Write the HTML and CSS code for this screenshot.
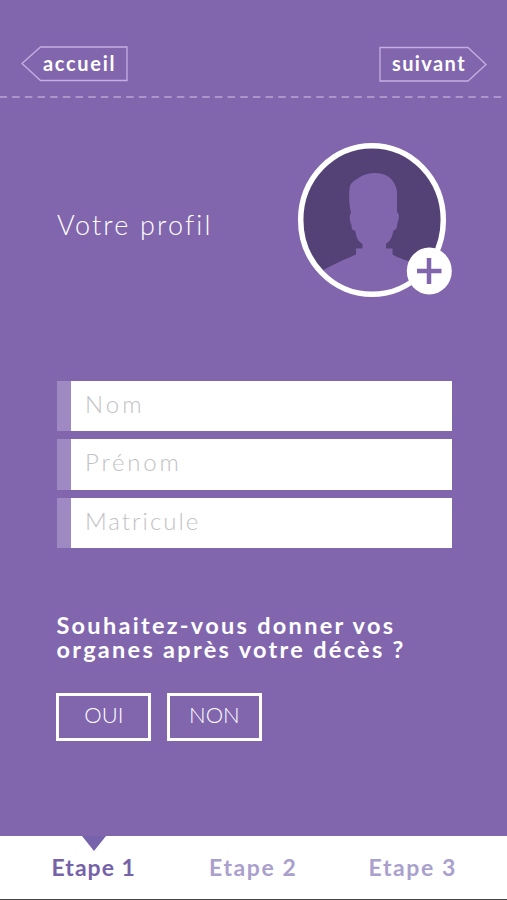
FILE: index.html
```html
<!DOCTYPE html>
<html lang="fr">
<head>
<meta charset="utf-8">
<title>Votre profil</title>
<link rel="stylesheet" href="styles.css">
</head>
<body>
<div class="app">
  <header class="top">
    <a class="tag tag-back">
      <svg class="tag-shape" viewBox="0 0 108 36"><path d="M2 17.500 20.500 1H107V34.500H20.500Z"/></svg>
      <span class="tag-text back-text">accueil</span>
    </a>
    <a class="tag tag-next">
      <svg class="tag-shape" viewBox="0 0 108 36"><path d="M1 1.500H89L107 18.500 89 35H1Z"/></svg>
      <span class="tag-text next-text">suivant</span>
    </a>
  </header>
  <svg class="dashes" viewBox="0 0 507 2"><path d="M-.5 1H504" stroke-dasharray="7.500 5.170"/></svg>
  <section class="profile">
    <h1 class="title">Votre profil</h1>
    <svg class="avatar" viewBox="0 0 156 156">
      <defs><clipPath id="disc"><ellipse cx="75" cy="78" rx="72" ry="75"/></clipPath></defs>
      <ellipse cx="75" cy="78" rx="72" ry="75" fill="#544277"/>
      <path clip-path="url(#disc)" fill="#8166ae" d="M10 160V138C20 131 30 126 40 121C48 117 54 115 59 112.500V106.500H65.500V102C62 100 60 97 59.500 94L58 88.500C55 88.500 54.500 86 54.500 83C52.500 79 52 73 54 71C52 62 51.500 51 53 44C55 39 59 38 63 35C68 32 73 31 78 31C86 31 92 34 95 38C98 42 100 46 100 51V70C103 72 102 77 100 83C100 86 99 88 96.500 88.500L95 94C94 97 92 100 89 102V106.500H95.500V112.500C101 116 106 117 111 119C124 123 131 127 140 134V160Z"/>
      <ellipse cx="75" cy="78" rx="71.300" ry="74.300" fill="none" stroke="#fff" stroke-width="5.500"/>
      <ellipse cx="132.300" cy="129" rx="22.500" ry="23.500" fill="#fff"/>
      <path d="M120 129H144.500M132 116V142" stroke="#8166ae" stroke-width="4.500"/>
    </svg>
  </section>
  <form class="fields">
    <label class="field"><span class="nom">Nom</span></label>
    <label class="field"><span class="prenom">Prénom</span></label>
    <label class="field"><span class="matricule">Matricule</span></label>
  </form>
  <section class="question">
    <p class="ask">Souhaitez-vous donner vos organes après votre décès ?</p>
    <div class="choices">
      <a class="choice">OUI</a>
      <a class="choice">NON</a>
    </div>
  </section>
  <nav class="steps">
    <a class="step active"><svg class="pointer" viewBox="0 0 24 15"><path d="M0 0H24L12 15Z"/></svg>Etape 1</a>
    <a class="step wide">Etape 2</a>
    <a class="step wide">Etape 3</a>
  </nav>
</div>
</body>
</html>
```
FILE: styles.css
```css
* { box-sizing: border-box; }
body { margin: 0; font-family: Lato, "Open Sans", sans-serif; background: #8166ae; }
.app { width: 507px; height: 900px; display: flex; flex-direction: column; overflow: hidden; color: #fff; }
.top { height: 96px; padding: 46px 20px 0; display: flex; justify-content: space-between; }
.tag { width: 108px; height: 36px; display: grid; }
.tag-shape { grid-area: 1 / 1; width: 108px; height: 36px; fill: none; stroke: #c5aee2; stroke-width: 1.3; }
.tag-text { grid-area: 1 / 1; font-size: 20px; font-weight: 700; line-height: 35px; letter-spacing: 1.7px; white-space: nowrap; }
.back-text { padding-left: 23px; }
.next-text { padding-left: 13px; letter-spacing: 1.4px; }
.dashes { width: 507px; height: 2px; flex: none; fill: none; stroke: #bda4d5; stroke-width: 1.6; }
.profile { height: 282.5px; padding: 44px 54px 0 57px; display: flex; justify-content: space-between; }
.title { margin: 65px 0 0; font-size: 27px; line-height: 36px; font-weight: 300; letter-spacing: 2.15px; white-space: nowrap; }
.avatar { width: 156px; height: 156px; flex: none; }
.fields { padding: 0 55.5px 0 56.5px; display: flex; flex-direction: column; gap: 8px; }
.field { height: 50.5px; background: #fff; border-left: 14px solid #9e89c2; padding-left: 14.5px; font-size: 24px; line-height: 46px; font-weight: 300; color: #c3c1c6; }
.nom { letter-spacing: 3px; }
.prenom { letter-spacing: 2.8px; }
.matricule { letter-spacing: 2px; }
.question { padding: 65px 0 0 56.4px; }
.ask { margin: 0; width: 380px; font-size: 23.5px; font-weight: 700; line-height: 24px; letter-spacing: 2.3px; }
.choices { display: flex; gap: 15.5px; margin-top: 32px; }
.choice { width: 95px; height: 48px; border: 3px solid #fff; font-size: 22px; font-weight: 300; line-height: 38px; text-align: center; }
.steps { margin-top: auto; height: 64px; background: #fff; border-bottom: 1px solid #444; display: flex; padding-left: 14px; }
.step { width: 159.5px; flex: none; text-align: center; color: #aaa0cd; font-size: 23px; font-weight: 700; line-height: 62px; letter-spacing: 1px; position: relative; }
.step.wide { letter-spacing: 1.6px; }
.step.active { color: #7562a8; }
.pointer { position: absolute; top: 0; left: 68px; width: 24px; height: 15px; fill: #7763ac; }
```
